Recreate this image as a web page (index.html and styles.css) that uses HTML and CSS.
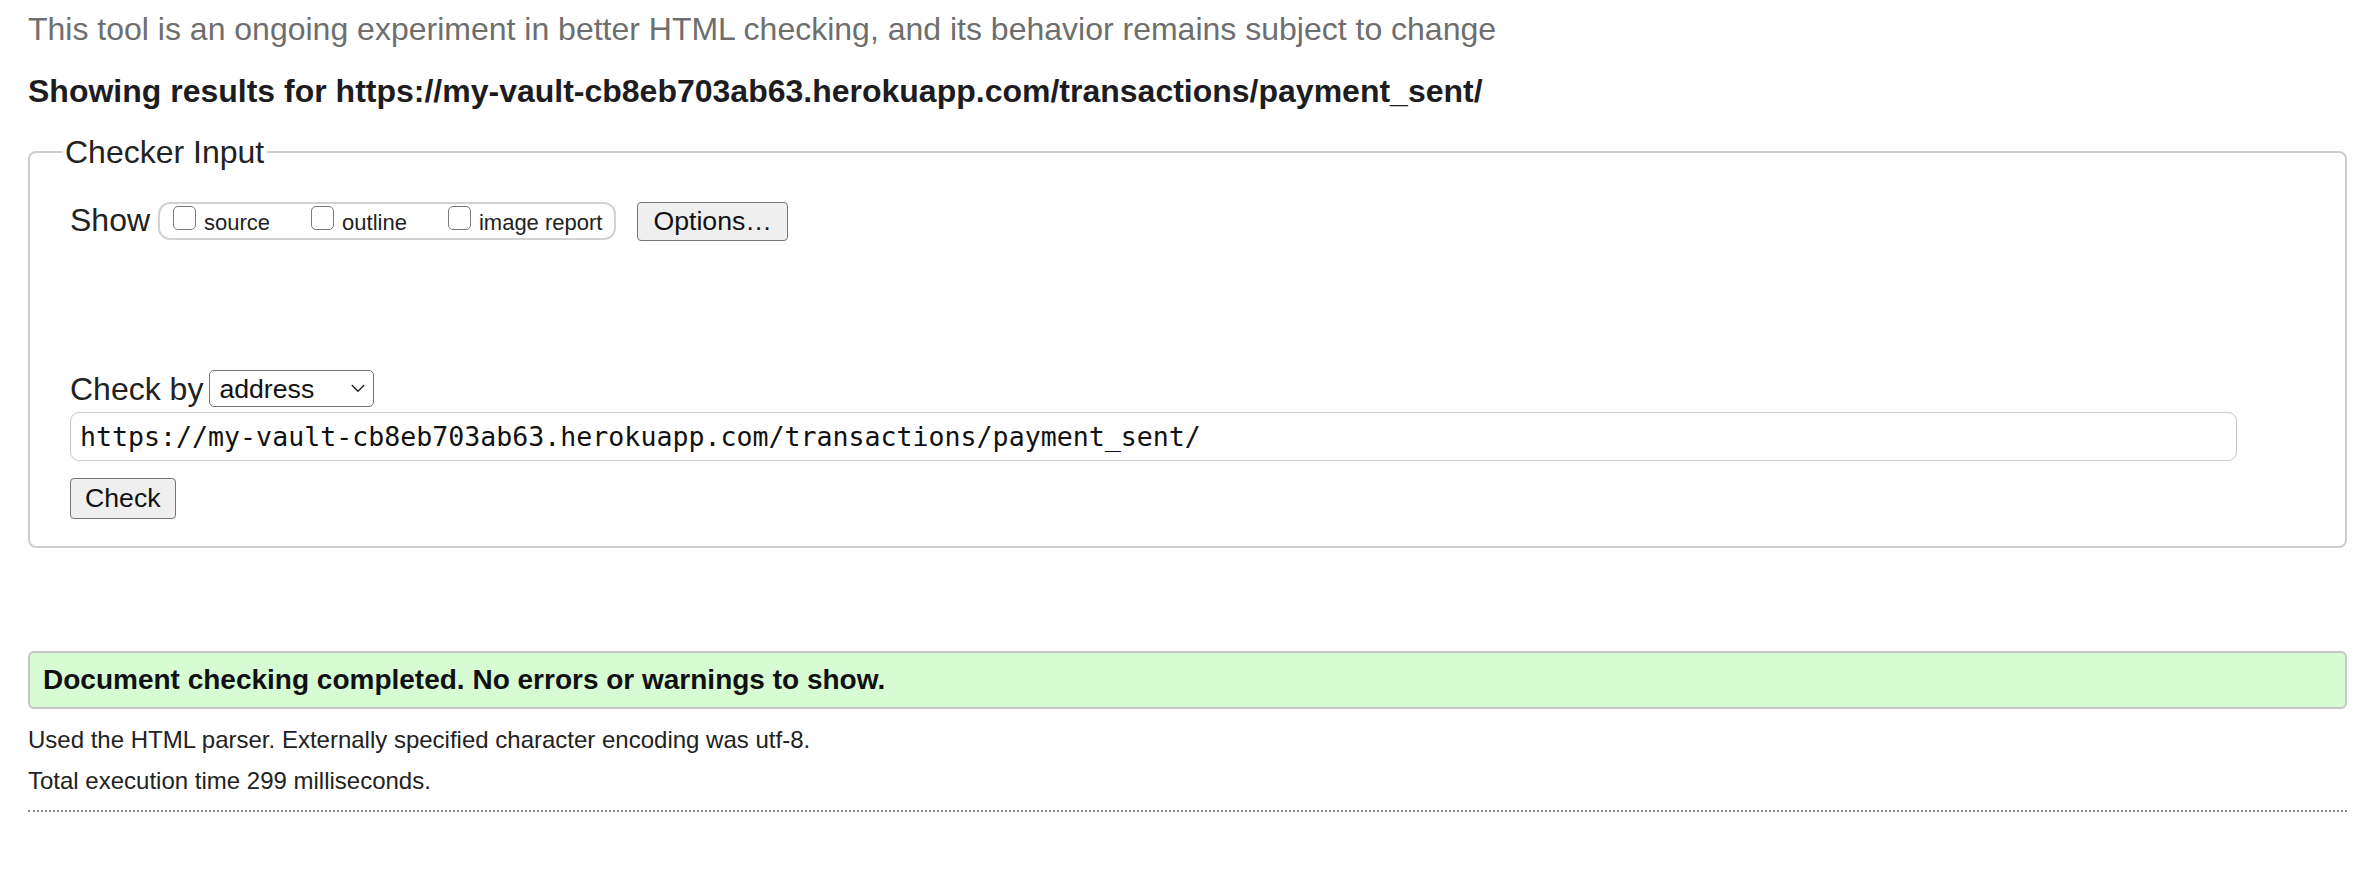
FILE: index.html
```html
<!DOCTYPE html>
<html lang="en">
<head>
<meta charset="utf-8">
<title>Nu Html Checker</title>
<link rel="stylesheet" href="styles.css">
</head>
<body>
<p class="about">This tool is an ongoing experiment in better HTML checking, and its behavior remains subject to change</p>
<h2 class="results-title">Showing results for https://my-vault-cb8eb703ab63.herokuapp.com/transactions/payment_sent/</h2>
<form class="checker" onsubmit="return false">
  <fieldset class="checker-input">
    <legend class="legend">Checker Input</legend>
    <div class="show-row">
      <span class="row-label">Show</span>
      <div class="show-group">
        <label class="opt"><input type="checkbox" class="box"><span class="opt-text">source</span></label>
        <label class="opt"><input type="checkbox" class="box"><span class="opt-text">outline</span></label>
        <label class="opt"><input type="checkbox" class="box"><span class="opt-text">image report</span></label>
      </div>
      <button type="button" class="btn btn-options">Options…</button>
    </div>
    <div class="checkby-row">
      <span class="row-label">Check by</span>
      <span class="select-wrap">
        <select class="select"><option>address</option></select>
        <svg class="chevron" viewBox="0 0 14 9" width="14" height="9"><path d="M1.2 1.5 L7 7.3 L12.8 1.5" fill="none" stroke="#222" stroke-width="1.4" stroke-linecap="round" stroke-linejoin="round"/></svg>
      </span>
    </div>
    <input class="url" type="text" value="https://my-vault-cb8eb703ab63.herokuapp.com/transactions/payment_sent/">
    <div class="submit-row"><button type="button" class="btn btn-check">Check</button></div>
  </fieldset>
</form>
<div class="success">Document checking completed. No errors or warnings to show.</div>
<p class="meta meta-first">Used the HTML parser. Externally specified character encoding was utf-8.</p>
<p class="meta meta-second">Total execution time 299 milliseconds.</p>
<hr class="dotted">
</body>
</html>
```

FILE: styles.css
```css
html, body {
  background: #ffffff;
}
body {
  margin: 0;
  padding: 0 31px 0 28px;
  font-family: "Liberation Sans", Arial, Helvetica, sans-serif;
  color: #222222;
}
.about {
  margin: 11px 0 0;
  font-size: 32px;
  line-height: 36px;
  color: #6e6e6e;
}
.results-title {
  margin: 26px 0 0;
  font-size: 32px;
  line-height: 36px;
  font-weight: bold;
  color: #1d1d21;
}
.checker {
  margin: 25px 0 0;
}
.checker-input {
  margin: 0;
  padding: 0 40px 27px 40px;
  border: 2px solid #cdcdcd;
  border-radius: 8px;
  min-inline-size: 0;
}
.legend {
  margin-left: -8px;
  padding: 0 3px;
  font-size: 32px;
  line-height: 36px;
  color: #222222;
}
.show-row {
  display: flex;
  align-items: flex-start;
  margin-top: 32px;
}
.row-label {
  font-size: 32px;
  line-height: 36px;
  color: #222222;
}
.show-group {
  display: flex;
  align-items: flex-start;
  box-sizing: border-box;
  height: 38px;
  margin-left: 8px;
  padding: 2px 12px 0 13px;
  border: 2px solid #d2d2d2;
  border-radius: 12px;
  gap: 41px;
}
.opt {
  display: flex;
  align-items: flex-start;
  gap: 8px;
}
.box {
  appearance: none;
  -webkit-appearance: none;
  box-sizing: border-box;
  width: 23px;
  height: 24px;
  margin: 0;
  border: 1.5px solid #7a7a7a;
  border-radius: 5px;
  background: #ffffff;
}
.opt-text {
  margin-top: 4px;
  font-size: 22px;
  line-height: 26px;
  color: #222222;
}
.btn {
  box-sizing: border-box;
  font-family: "Liberation Sans", Arial, Helvetica, sans-serif;
  font-size: 26.67px;
  color: #111111;
  background: #efefef;
  border: 1.5px solid #767676;
  border-radius: 4px;
}
.btn-options {
  height: 39px;
  margin-left: 21px;
  padding: 0 15px;
}
.checkby-row {
  display: flex;
  align-items: center;
  gap: 6px;
  margin-top: 129px;
  height: 37px;
}
.select-wrap {
  position: relative;
  display: inline-block;
}
.select {
  appearance: none;
  -webkit-appearance: none;
  box-sizing: border-box;
  display: block;
  width: 165px;
  height: 37px;
  padding: 0 0 0 9px;
  font-family: "Liberation Sans", Arial, Helvetica, sans-serif;
  font-size: 26.67px;
  color: #111111;
  background: #ffffff;
  border: 1.5px solid #767676;
  border-radius: 5px;
}
.chevron {
  position: absolute;
  right: 9px;
  top: 14px;
  pointer-events: none;
}
.url {
  box-sizing: border-box;
  display: block;
  width: 2167px;
  height: 49px;
  margin-top: 5px;
  padding: 0 0 0 9px;
  font-family: "DejaVu Sans Mono", "Liberation Mono", monospace;
  font-size: 26.6px;
  color: #111111;
  background: #ffffff;
  border: 1.5px solid #c9c9c9;
  border-radius: 9px;
  outline: none;
}
.submit-row {
  margin-top: 17px;
  display: flex;
}
.btn-check {
  height: 41px;
  padding: 0 14px;
}
.success {
  box-sizing: border-box;
  display: flex;
  align-items: center;
  height: 58px;
  margin-top: 103px;
  padding: 0 13px;
  font-size: 28px;
  font-weight: bold;
  color: #111111;
  background: #d7fbd3;
  border: 2px solid #c6c6c6;
  border-radius: 6px;
}
.meta {
  margin: 0;
  font-size: 24px;
  line-height: 28px;
  color: #222222;
}
.meta-first {
  margin-top: 17px;
}
.meta-second {
  margin-top: 13px;
}
.dotted {
  margin: 15px 0 0;
  height: 0;
  border: 0;
  border-top: 2px dotted #8a8a8a;
}
```
